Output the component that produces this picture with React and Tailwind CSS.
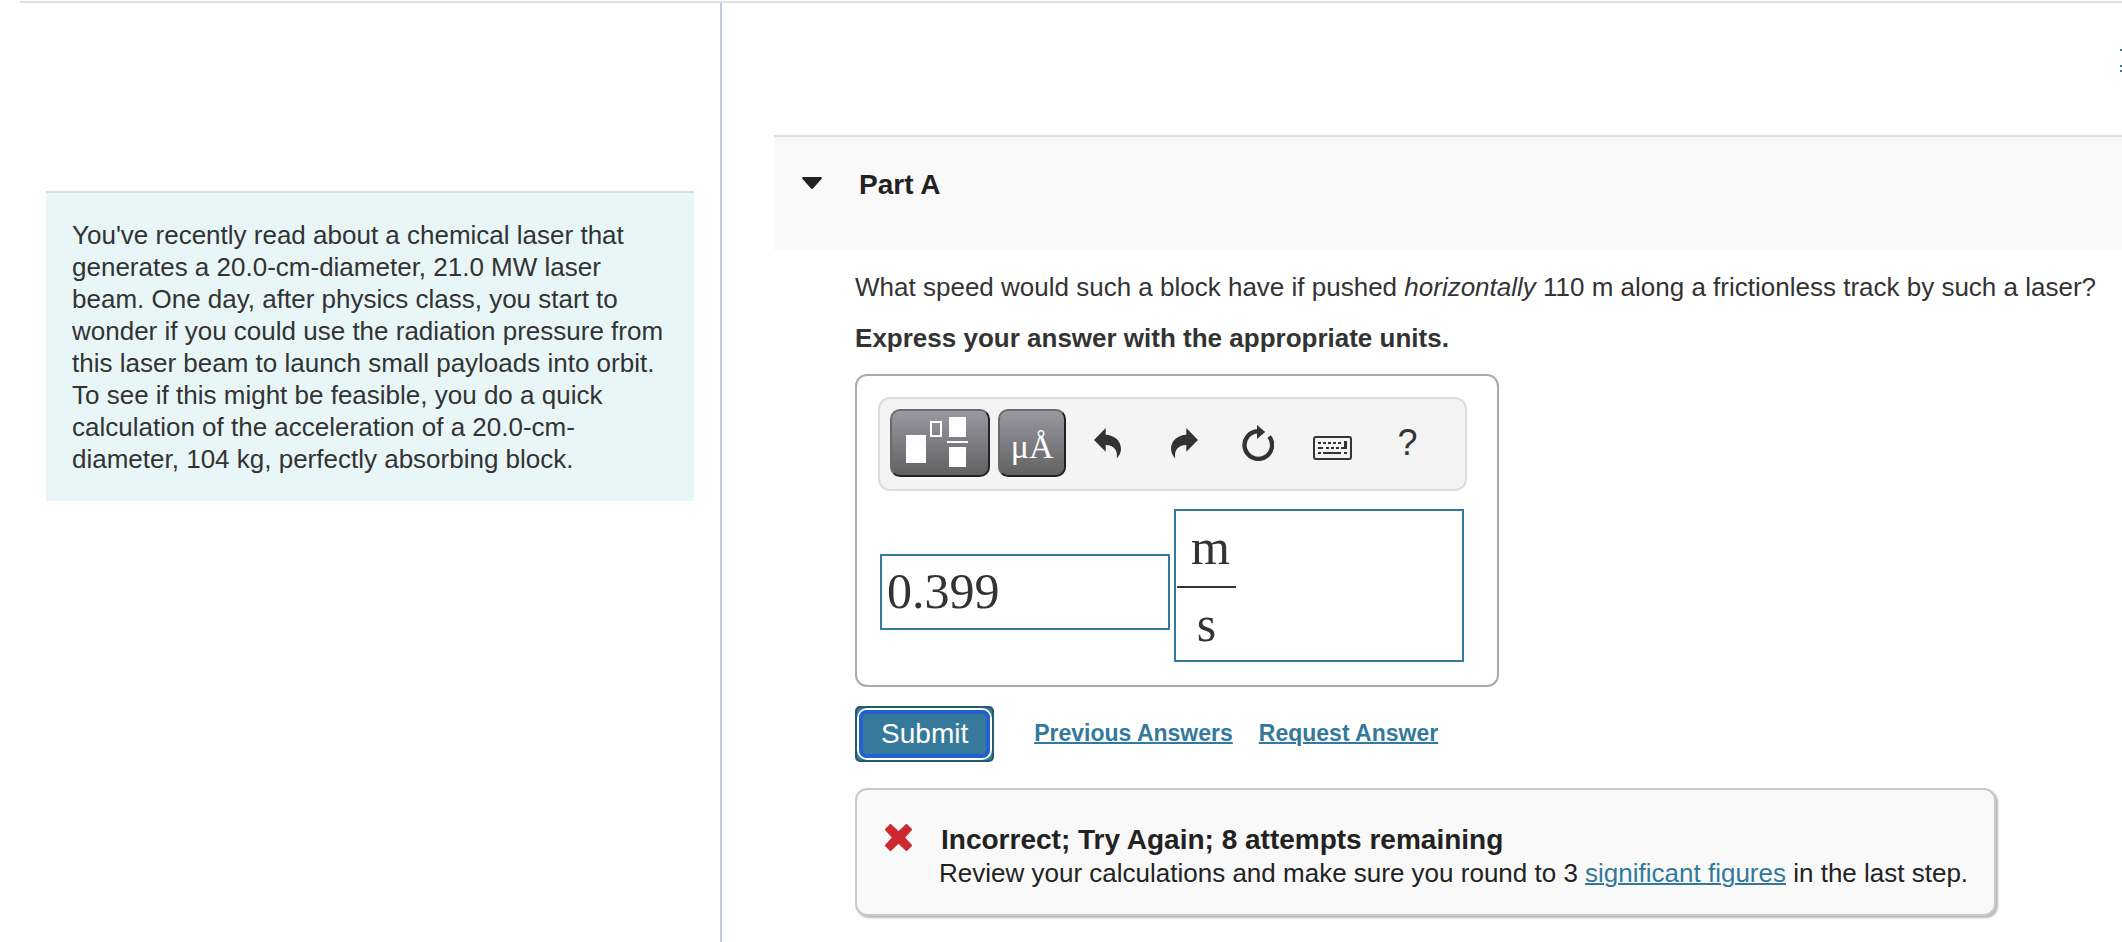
const links = 'text-[#32799b] underline decoration-2';

function TemplateIcon() {
  return (
    <svg width="96" height="64" viewBox="0 0 96 64" fill="white">
      <rect x="14" y="24" width="20" height="28" />
      <rect x="39" y="11" width="10" height="14" fill="none" stroke="white" strokeWidth="2" />
      <rect x="57" y="6" width="17" height="20" />
      <rect x="55" y="30" width="21" height="2" />
      <rect x="57" y="36" width="17" height="20" />
    </svg>
  );
}

function UndoIcon({ flip }) {
  return (
    <svg width="27" height="31" viewBox="0 0 27 31" fill="#333" className={flip ? '-scale-x-100' : ''}>
      <path d="M0 12 11.7 0V6.7C20 7 27 12.5 27 21C27 25 25 28 22.7 30.5C24 22 20 17.3 11.7 17V23.7Z" />
    </svg>
  );
}

function ResetIcon() {
  return (
    <svg width="32" height="36" viewBox="0 0 32 36">
      <path d="M27.2 11.5A13.8 13.8 0 1 1 16 6.2" fill="none" stroke="#333" strokeWidth="4.4" />
      <path d="M15 0 23.2 7 15 14Z" fill="#333" />
    </svg>
  );
}

function KeyboardIcon() {
  return (
    <svg width="39" height="34" viewBox="0 0 39 34" fill="#333">
      <rect x="1" y="11" width="37" height="22" rx="2" fill="none" stroke="#333" strokeWidth="2" />
      <path d="M5 16h3v2H5zM10 16h3v2h-3zM15 16h3v2h-3zM20 16h3v2h-3zM25 16h3v2h-3z" />
      <path d="M31 15h3v8h-6v-2h3z" />
      <path d="M5 21h5v2H5zM13 21h3v2h-3zM18 21h3v2h-3zM23 21h3v2h-3z" />
      <path d="M5 26h3v2H5zM10 26h18v2H10zM31 26h3v2h-3z" />
    </svg>
  );
}

function Toolbar() {
  const dark =
    'h-[68px] rounded-[10px] border-2 border-t-[#6b6b6b] border-l-[#6b6b6b] border-b-[#222] border-r-[#222] bg-linear-to-b from-[#9a98a3] to-[#626262] flex items-center justify-center';
  const plain = 'w-[75px] h-[68px] flex items-center justify-center';
  return (
    <div className="flex items-center rounded-xl border-2 border-[#dcdcdc] bg-[#f4f4f4] px-[10px] pt-[10px] pb-3">
      <button aria-label="Templates" className={`${dark} w-[100px]`}>
        <TemplateIcon />
      </button>
      <button
        aria-label="Units"
        className={`${dark} ml-2 mr-1 w-[68px] pt-2 font-['Liberation_Serif',serif] text-[34px] leading-[40px] text-white`}
      >
        μÅ
      </button>
      <button aria-label="Undo" className={plain}><UndoIcon /></button>
      <button aria-label="Redo" className={`${plain} pl-1`}><UndoIcon flip /></button>
      <button aria-label="Reset" className={plain}><ResetIcon /></button>
      <button aria-label="Keyboard" className={plain}><KeyboardIcon /></button>
      <button aria-label="Help" className={`${plain} text-[36px] leading-[40px] text-[#333]`}>?</button>
    </div>
  );
}

function AnswerBox() {
  return (
    <div className="w-[644px] rounded-xl border-2 border-[#aaa] pt-[21px] pr-[30px] pb-[23px] pl-[21px]">
      <Toolbar />
      <div className="mt-[18px] ml-[2px] flex items-end gap-1 font-['Liberation_Serif',serif] text-[50px] text-[#333]">
        <input
          aria-label="Value"
          defaultValue="0.399"
          className="mb-8 h-[76px] w-[290px] border-2 border-[#32799b] px-[5px] pb-[2px] outline-none"
        />
        <div className="h-[153px] w-[290px] border-2 border-[#32799b] pl-px">
          <div className="w-[59px]">
            <input
              aria-label="Unit numerator"
              defaultValue="m"
              className="block h-[77px] w-full border-b-2 border-[#333] pb-1 pl-2 text-center outline-none"
            />
            <input
              aria-label="Unit denominator"
              defaultValue="s"
              className="block h-[72px] w-full text-center outline-none"
            />
          </div>
        </div>
      </div>
    </div>
  );
}

function Feedback() {
  return (
    <div className="mt-[26px] flex w-fit rounded-xl border-2 border-[#c8c8c8] bg-[#f9f9f9] pt-[33px] pr-[26px] pb-[25px] pl-[28px] text-[#222] shadow-[2px_2px_2px_#bbb]">
      <svg width="27" height="27" viewBox="0 0 27 27" className="mt-px mr-[27px] shrink-0">
        <path
          d="M5.5 1 13.5 8.5 21.5 1 26 5.5 18.8 13.5 26 21.5 21.5 26 13.5 18.5 5.5 26 1 21.5 8.2 13.5 1 5.5Z"
          fill="#cc2a2e"
          stroke="#cc2a2e"
          strokeWidth="2"
          strokeLinejoin="round"
        />
      </svg>
      <div>
        <h3 className="pl-[2px] text-[28px] leading-[34px] font-bold">Incorrect; Try Again; 8 attempts remaining</h3>
        <p className="text-[26px] leading-[32px]">
          Review your calculations and make sure you round to 3{' '}
          <a href="#" className={links}>significant figures</a> in the last step.
        </p>
      </div>
    </div>
  );
}

export default function App() {
  return (
    <div className="flex min-h-screen flex-col overflow-hidden bg-white pt-px pl-5 font-['Liberation_Sans',Arial,sans-serif] text-[26px] leading-[32px] text-[#333]">
      <div className="flex grow border-t-2 border-[#dfe0e0]">
        <aside className="w-[33.4%] shrink-0 border-r-2 border-[#bfcae0] pt-[188px] pr-[26px] pl-[26px]">
          <p className="border-t-2 border-[#ddd] bg-[#e8f6f7] p-[26px]">
            You've recently read about a chemical laser that generates a 20.0-cm-diameter, 21.0 MW laser beam. One day,
            after physics class, you start to wonder if you could use the radiation pressure from this laser beam to
            launch small payloads into orbit. To see if this might be feasible, you do a quick calculation of the
            acceleration of a 20.0-cm-diameter, 104 kg, perfectly absorbing block.
          </p>
        </aside>

        <main className="min-w-0 grow pl-[52px]">
          <div className="flex h-[132px] justify-end pt-[45px]">
            <a href="#" aria-label="More" className="h-6 w-[2px] border-b-2 border-[#32799b]">
              <svg width="2" height="20" viewBox="0 0 2 20" fill="#32799b">
                <path d="M0 1h2v2H0zM0 17h2v2H0z" />
              </svg>
            </a>
          </div>

          <header className="h-[115px] border-t-2 border-[#dedfdf] bg-[#f9f9f9] pt-8 pl-7">
            <button className="flex items-center gap-[37px] text-[28px] leading-[32px] font-bold text-[#222]">
              <svg width="20" height="16" viewBox="0 0 20 16" fill="#222">
                <path d="M1 0H19Q20.5 .5 19.5 2L11 11.5Q10 12.4 9 11.5L.5 2Q-.5 .5 1 0Z" />
              </svg>
              Part A
            </button>
          </header>

          <section className="pl-[81px]">
            <p className="pt-[21px]">
              What speed would such a block have if pushed <i>horizontally</i> 110 m along a frictionless track by such
              a laser?
            </p>
            <p className="mt-[19px] mb-5 font-bold">Express your answer with the appropriate units.</p>

            <AnswerBox />

            <div className="mt-[19px] flex items-center">
              <button className="mr-10 rounded-[5px] border-2 border-[#235a70] bg-[#357a9b] p-[2px]">
                <span className="block rounded-lg border-4 border-[#2460cf] px-[18px] py-1 text-[28px] leading-[32px] text-white ring-2 ring-white">
                  Submit
                </span>
              </button>
              <div className="flex gap-[26px] pb-[2px] text-[23px] font-bold">
                <a href="#" className={links}>Previous Answers</a>
                <a href="#" className={links}>Request Answer</a>
              </div>
            </div>

            <Feedback />
          </section>
        </main>
      </div>
    </div>
  );
}
